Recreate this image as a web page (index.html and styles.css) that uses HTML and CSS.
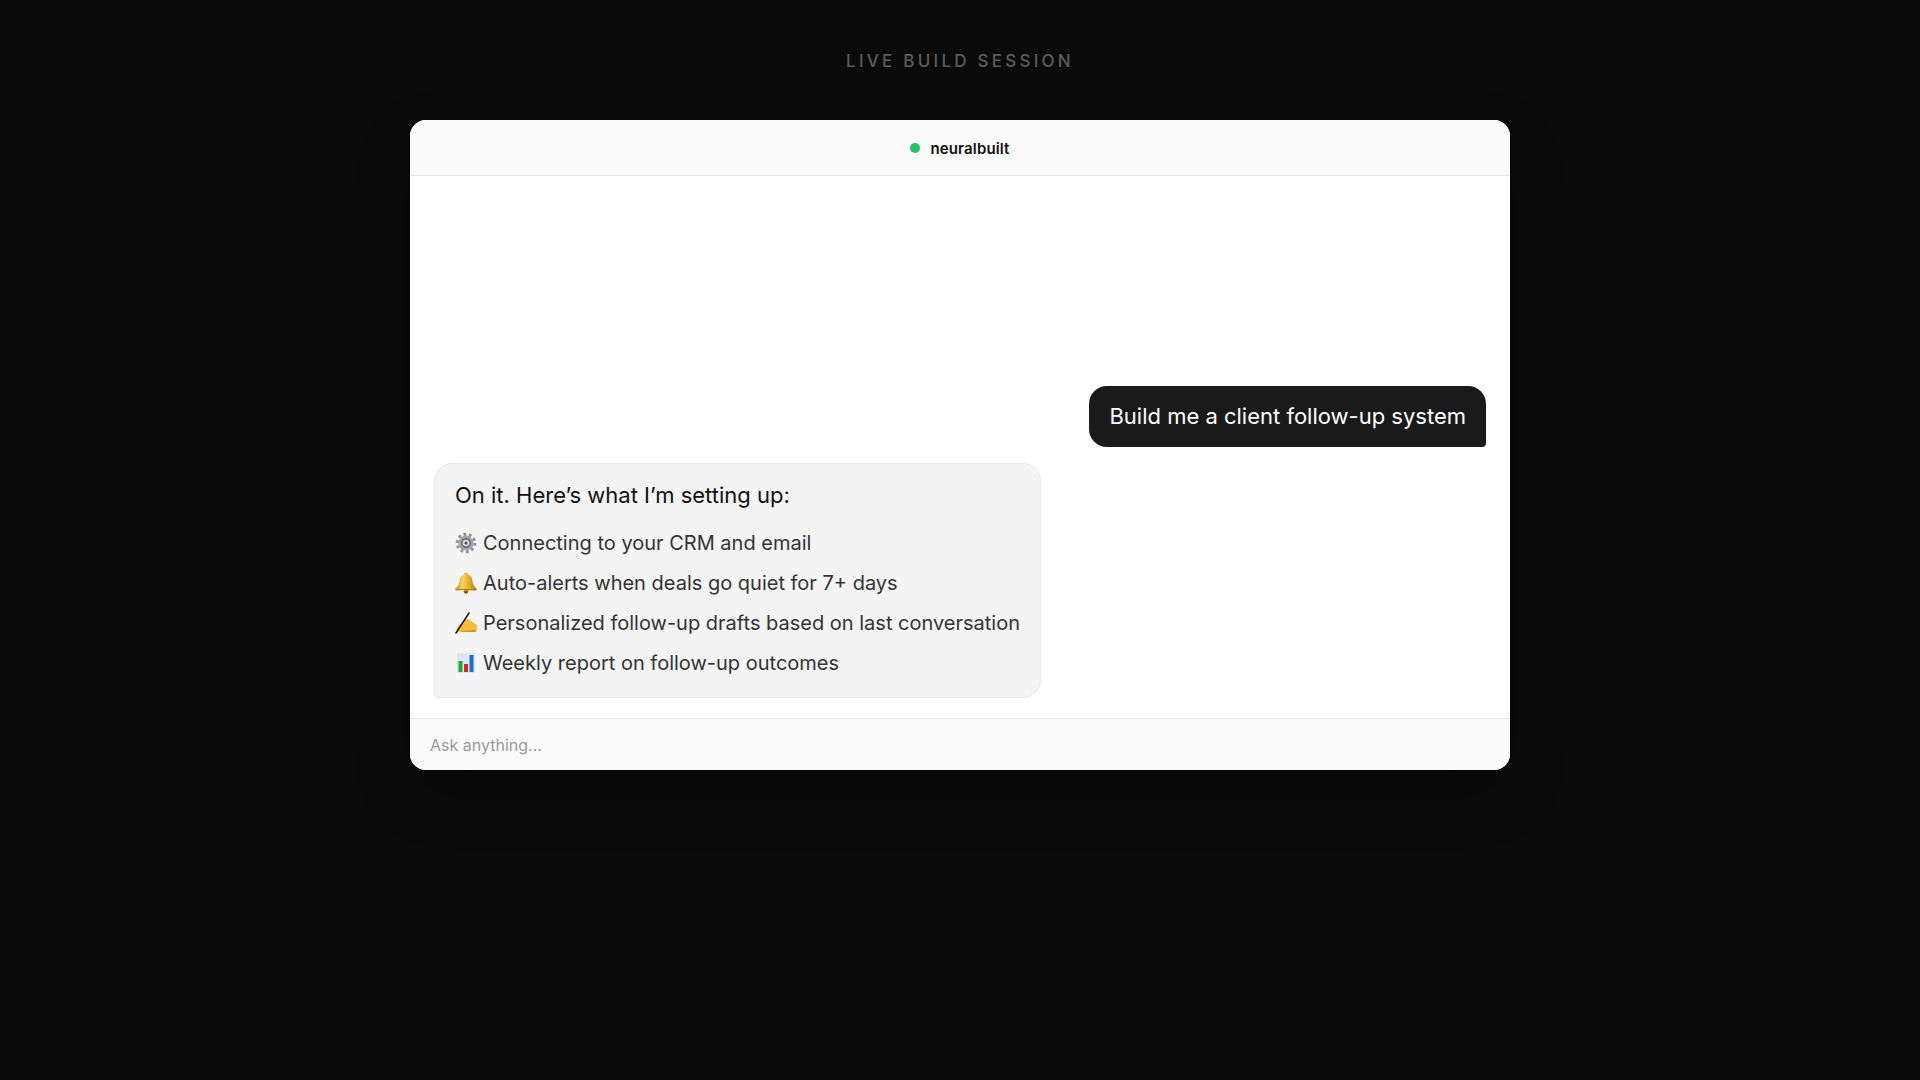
FILE: index.html
```html
<!DOCTYPE html>
<html lang="en">
<head>
    <meta charset="UTF-8">
    <title>Live Build Session</title>
    <link rel="stylesheet" href="styles.css">
</head>
<body>
    <div class="session-label">LIVE BUILD SESSION</div>
    <div class="chat-window">
        <div class="chat-header"><span class="status-dot"></span><span class="chat-name">neuralbuilt</span></div>
        <div class="chat-messages">
            <div class="bubble-user">Build me a client follow-up system</div>
            <div class="bubble-bot">
                <div class="bot-intro">On it. Here’s what I’m setting up:</div>
                <div class="bot-line">
                    <svg class="bot-icon" viewBox="0 0 22 22">
                        <circle cx="11" cy="11" r="8.6" fill="none" stroke="#8c9299" stroke-width="3.4" stroke-dasharray="2.7 2.7"/>
                        <circle cx="11" cy="11" r="7.6" fill="#a4a9af"/>
                        <circle cx="11" cy="11" r="5.2" fill="#6d747c"/>
                        <circle cx="11" cy="11" r="3.3" fill="#d9dce0"/>
                        <circle cx="11" cy="11" r="1.5" fill="#4b5158"/>
                    </svg>
                    Connecting to your CRM and email
                </div>
                <div class="bot-line">
                    <svg class="bot-icon" viewBox="0 0 22 22">
                        <defs>
                            <linearGradient id="bellGold" x1="0" y1="0" x2="1" y2="0">
                                <stop offset="0" stop-color="#c98f1a"/>
                                <stop offset="0.35" stop-color="#f6d65c"/>
                                <stop offset="0.7" stop-color="#dfa526"/>
                                <stop offset="1" stop-color="#a8720f"/>
                            </linearGradient>
                        </defs>
                        <circle cx="11" cy="19.500" r="2.300" fill="#8f6210"/>
                        <path d="M11 .5c1.300 0 2.100.9 2 2 3 .9 4.300 3.500 4.500 6.600.2 3.500 1.700 5.600 4 7.400.7.7.3 2-.8 2H1.300c-1.100 0-1.500-1.300-.8-2 2.300-1.800 3.800-3.900 4-7.400.2-3.100 1.500-5.700 4.500-6.600-.1-1.100.7-2 2-2z" fill="url(#bellGold)"/>
                        <path d="M1.500 17.500h19" stroke="#b57f14" stroke-width="1"/>
                    </svg>
                    Auto-alerts when deals go quiet for 7+ days
                </div>
                <div class="bot-line">
                    <svg class="bot-icon" viewBox="0 0 22 22">
                        <path d="M1.200 17.500C2.500 14 5.500 12 7.500 10c1.800-1.800 3.600-3.200 5.800-3 1.200.1 1.700 1 1.900 2 2.700.8 5 2.300 6.500 4 .6 2.200.3 5-1.200 7H6c-2 0-3.800-.7-4.800-2.500z" fill="#f8bd3e"/>
                        <path d="M4.500 20c5.500-1.600 10.500-2 17-2.600-.2 1-.6 1.900-1 2.600z" fill="#dc9022"/>
                        <path d="M1 21 14 1" stroke="#1b1b1b" stroke-width="1.500" fill="none" stroke-linecap="round"/>
                    </svg>
                    Personalized follow-up drafts based on last conversation
                </div>
                <div class="bot-line">
                    <svg class="bot-icon" viewBox="0 0 22 22">
                        <rect x="2" y="1" width="18" height="20" fill="#dfe6ee"/>
                        <rect x="3.500" y="9" width="4" height="11" fill="#1fa83c"/>
                        <rect x="9" y="12" width="4" height="8" fill="#d8262c"/>
                        <rect x="14.500" y="3" width="4" height="17" fill="#1f6fc9"/>
                    </svg>
                    Weekly report on follow-up outcomes
                </div>
            </div>
        </div>
        <div class="chat-input">Ask anything...</div>
    </div>
</body>
</html>
```
FILE: styles.css
```css
* { box-sizing: border-box; }
body {
    margin: 0;
    height: 1080px;
    background: #0a0a0a;
    font-family: Inter, sans-serif;
    display: flex;
    flex-direction: column;
    align-items: center;
    overflow: hidden;
}
.session-label {
    margin-top: 52px;
    height: 18px;
    line-height: 18px;
    font-size: 17px;
    font-weight: 500;
    letter-spacing: 3.24px;
    color: #5c5c5c;
}
.chat-window {
    margin-top: 50px;
    width: 1100px;
    height: 650px;
    background: #fff;
    border-radius: 16px;
    box-shadow: 0 24px 60px -6px rgba(0, 0, 0, 0.3);
    display: flex;
    flex-direction: column;
    overflow: hidden;
}
.chat-header {
    height: 56px;
    padding-top: 1px;
    background: #fafafa;
    border-bottom: 1px solid #e8e8e8;
    display: flex;
    align-items: center;
    justify-content: center;
    gap: 10px;
}
.status-dot {
    width: 10px;
    height: 10px;
    border-radius: 50%;
    background: #22c55e;
}
.chat-name {
    font-size: 15px;
    font-weight: 600;
    letter-spacing: 0.15px;
    color: #111;
}
.chat-messages {
    flex: 1;
    display: flex;
    flex-direction: column;
    justify-content: flex-end;
    gap: 16px;
    padding: 24px 24px 20px;
}
.bubble-user {
    align-self: flex-end;
    background: #1a1a1a;
    color: #fff;
    font-size: 22px;
    line-height: 1.4;
    padding: 15px 20px;
    border-radius: 18px 18px 4px 18px;
}
.bubble-bot {
    align-self: flex-start;
    background: #f4f4f4;
    border: 1px solid #e8e8e8;
    border-radius: 18px 18px 18px 4px;
    padding: 16px 20px 14px;
    color: #333;
    font-size: 20px;
}
.bot-intro {
    font-size: 22px;
    line-height: 1.4;
    color: #111;
    margin-bottom: 12px;
}
.bot-line {
    display: flex;
    align-items: center;
    gap: 6px;
    height: 40px;
}
.bot-icon {
    width: 22px;
    height: 22px;
    flex-shrink: 0;
}
.chat-input {
    height: 52px;
    background: #fafafa;
    border-top: 1px solid #e8e8e8;
    padding: 0 20px;
    display: flex;
    align-items: center;
    font-size: 16px;
    color: #999;
}
```
